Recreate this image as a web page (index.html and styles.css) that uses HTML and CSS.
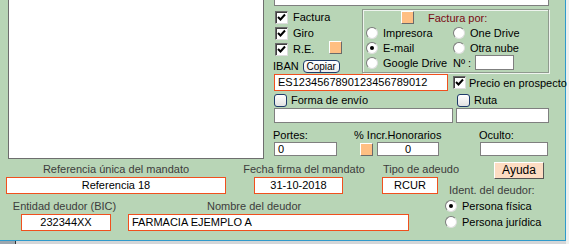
FILE: index.html
```html
<!DOCTYPE html>
<html lang="es">
<head>
    <meta charset="UTF-8">
    <link rel="stylesheet" href="styles.css">
    <title>Datos del cliente</title>
</head>
<body>
<div class="form">
    <div class="top">
        <div class="memo"></div>
        <div class="side">
            <div class="topfield"></div>
            <div class="opts">
                <div class="checks">
                    <div class="chk"><span class="box"><svg width="9" height="9" viewBox="0 0 9 9"><path d="M1 4 L3.5 6.5 L8 1.5" fill="none" stroke="#000" stroke-width="2"/></svg></span>Factura</div>
                    <div class="chk"><span class="box"><svg width="9" height="9" viewBox="0 0 9 9"><path d="M1 4 L3.5 6.5 L8 1.5" fill="none" stroke="#000" stroke-width="2"/></svg></span>Giro</div>
                    <div class="chk"><span class="box"><svg width="9" height="9" viewBox="0 0 9 9"><path d="M1 4 L3.5 6.5 L8 1.5" fill="none" stroke="#000" stroke-width="2"/></svg></span>R.E.<span class="sq re-sq"></span></div>
                    <div class="iban-row">IBAN <span class="copy">Copiar</span></div>
                </div>
                <div class="group">
                    <div class="group-title"><span class="sq"></span><span class="title">Factura por:</span></div>
                    <div class="radios">
                        <div class="rad"><span class="dot"></span>Impresora</div>
                        <div class="rad"><span class="dot"></span>One Drive</div>
                        <div class="rad"><span class="dot on"></span>E-mail</div>
                        <div class="rad"><span class="dot"></span>Otra nube</div>
                        <div class="rad"><span class="dot"></span>Google Drive</div>
                        <div class="rad">Nº :<span class="field num"></span></div>
                    </div>
                </div>
            </div>
            <div class="iban-line">
                <div class="field orange iban">ES1234567890123456789012</div>
                <div class="chk precio"><span class="box"><svg width="9" height="9" viewBox="0 0 9 9"><path d="M1 4 L3.5 6.5 L8 1.5" fill="none" stroke="#000" stroke-width="2"/></svg></span>Precio en prospecto</div>
            </div>
            <div class="envio-line">
                <div class="chk"><span class="flat"></span>Forma de envío</div>
                <div class="chk"><span class="flat"></span>Ruta</div>
            </div>
            <div class="envio-inputs">
                <div class="field"></div>
                <div class="field"></div>
            </div>
            <div class="costs">
                <div class="cost portes">
                    <div class="lbl">Portes:</div>
                    <div class="field">0</div>
                </div>
                <div class="cost honor">
                    <div class="lbl">% Incr.Honorarios</div>
                    <div class="honor-row"><span class="sq"></span><div class="field center">0</div></div>
                </div>
                <div class="cost oculto">
                    <div class="lbl">Oculto:</div>
                    <div class="field"></div>
                </div>
            </div>
        </div>
    </div>
    <div class="bottom">
        <div class="mandate">
            <div class="mrow">
                <div class="col col-ref">
                    <div class="cap">Referencia única del mandato</div>
                    <div class="field orange center">Referencia 18</div>
                </div>
                <div class="col col-fecha">
                    <div class="cap">Fecha firma del mandato</div>
                    <div class="field orange center">31-10-2018</div>
                </div>
                <div class="col col-tipo">
                    <div class="cap">Tipo de adeudo</div>
                    <div class="field orange center">RCUR</div>
                </div>
            </div>
            <div class="mrow second">
                <div class="col col-bic">
                    <div class="cap">Entidad deudor (BIC)</div>
                    <div class="field orange center">232344XX</div>
                </div>
                <div class="col col-nombre">
                    <div class="cap left">Nombre del deudor</div>
                    <div class="field orange">FARMACIA EJEMPLO A</div>
                </div>
            </div>
        </div>
        <div class="ident">
            <div class="help">Ayuda</div>
            <div class="ident-cap">Ident. del deudor:</div>
            <div class="rad"><span class="dot on"></span>Persona física</div>
            <div class="rad"><span class="dot"></span>Persona jurídica</div>
        </div>
    </div>
</div>
<div class="taskbar"><span class="tb-left"></span></div>
</body>
</html>
```

FILE: styles.css
```css
body {
    margin: 0;
    background-color: #eef0ee;
    font-family: "Liberation Sans", Arial, sans-serif;
    font-size: 11px;
    color: #000;
}
.form {
    width: 566px;
    height: 241px;
    box-sizing: border-box;
    background-color: #b8d5b6;
    border-right: 1px solid #2f9acb;
    border-bottom: 1px solid #2f9acb;
}
.taskbar {
    display: flex;
    width: 566px;
    height: 3px;
    background-color: #d4d6d8;
}
.tb-left {
    width: 15px;
    background-color: #9ca6ae;
    border-right: 1px solid #333;
}

/* top part */
.top {
    display: flex;
    height: 159px;
    padding-left: 8px;
}
.memo {
    width: 256px;
    height: 159px;
    box-sizing: border-box;
    background-color: #fff;
    border: 1px solid #6e6e6e;
    border-top: none;
}
.side {
    margin-left: 10px;
    width: 275px;
}
.topfield {
    height: 6px;
    box-sizing: border-box;
    background-color: #fff;
    border: 1px solid #7f7f7f;
    border-top: none;
}
.opts {
    display: flex;
    height: 67px;
}
.checks {
    width: 88px;
    padding-top: 3px;
}
.chk {
    display: flex;
    align-items: center;
    height: 16px;
    white-space: nowrap;
}
.box {
    display: inline-flex;
    align-items: center;
    justify-content: center;
    flex-shrink: 0;
    width: 13px;
    height: 13px;
    box-sizing: border-box;
    margin-left: 1px;
    margin-right: 5px;
    background-color: #fff;
    border: 1px solid;
    border-color: #6a6a6a #dcdcdc #dcdcdc #6a6a6a;
    box-shadow: inset 1px 1px 0 #404040;
}
.sq {
    display: inline-block;
    flex-shrink: 0;
    width: 13px;
    height: 13px;
    box-sizing: border-box;
    background-color: #ffbf82;
    border: 1px solid;
    border-color: #fff #6a6a6a #6a6a6a #fff;
}
.re-sq {
    margin-left: 15px;
    margin-top: -3px;
}
.iban-row {
    display: flex;
    align-items: center;
    height: 16px;
    margin-top: 1px;
    margin-left: -1px;
}
.copy {
    display: inline-block;
    margin-left: 4px;
    width: 37px;
    height: 13px;
    box-sizing: border-box;
    border: 1px solid #1e3b6a;
    border-radius: 4px;
    background: linear-gradient(#fff, #ececec);
    font-size: 10px;
    line-height: 11px;
    text-align: center;
}

/* Factura por */
.group {
    margin-top: 3px;
    width: 187px;
    height: 64px;
    box-sizing: border-box;
    border: 1px solid #8f9a8e;
    box-shadow: inset 1px 1px 0 #eef4ee, 1px 1px 0 #eef4ee;
    padding-left: 3px;
}
.group-title {
    display: flex;
    align-items: center;
    height: 15px;
    padding-left: 35px;
}
.title {
    margin-left: 14px;
    color: #7a0a14;
}
.radios {
    display: grid;
    grid-template-columns: 87px auto;
    grid-auto-rows: 15px;
}
.rad {
    display: flex;
    align-items: center;
    white-space: nowrap;
    height: 15px;
}
.dot {
    position: relative;
    display: inline-block;
    flex-shrink: 0;
    width: 12px;
    height: 12px;
    box-sizing: border-box;
    margin-right: 5px;
    border-radius: 50%;
    background-color: #fff;
    border: 1px solid;
    border-color: #7a7a7a #dedede #dedede #7a7a7a;
}
.dot.on::after {
    content: "";
    position: absolute;
    left: 3px;
    top: 3px;
    width: 4px;
    height: 4px;
    border-radius: 50%;
    background-color: #000;
}
.num {
    margin-left: 4px;
    width: 39px;
    height: 14px;
}

/* fields */
.field {
    flex-shrink: 0;
    height: 15px;
    box-sizing: border-box;
    background-color: #fff;
    border: 1px solid #7f7f7f;
    padding-left: 3px;
    line-height: 13px;
    white-space: nowrap;
}
.field.orange {
    border-color: #f0501e;
    height: 17px;
    line-height: 15px;
}
.field.center {
    text-align: center;
    padding-left: 0;
}
.iban-line {
    display: flex;
    align-items: center;
    margin-top: 1px;
}
.iban {
    width: 174px;
    height: 16px;
    line-height: 14px;
}
.precio {
    margin-left: 4px;
}
.precio .box {
    margin-right: 3px;
}
.envio-line {
    display: grid;
    grid-template-columns: 183px auto;
    height: 17px;
    align-items: end;
}
.flat {
    display: inline-block;
    width: 13px;
    height: 13px;
    box-sizing: border-box;
    margin-right: 4px;
    border: 1px solid #1e3b6a;
    border-radius: 3px;
    background: linear-gradient(#fff, #e2e2e2);
}
.envio-inputs {
    display: grid;
    grid-template-columns: 179px 93px;
    column-gap: 3px;
}
.costs {
    display: flex;
    margin-top: 5px;
}
.lbl {
    height: 14px;
    line-height: 14px;
    margin-left: -1px;
}
.cost .field {
    height: 14px;
    line-height: 12px;
}
.portes {
    width: 81px;
}
.portes .field {
    width: 63px;
}
.honor {
    width: 125px;
}
.honor-row {
    display: flex;
    align-items: center;
}
.honor-row .sq {
    margin-left: 5px;
    margin-right: 4px;
}
.honor-row .field {
    width: 62px;
}
.oculto .field {
    width: 68px;
}

/* bottom part */
.bottom {
    display: flex;
}
.mandate {
    flex-shrink: 0;
    width: 440px;
}
.mrow {
    display: flex;
    padding-top: 3px;
}
.mrow.second {
    padding-top: 5px;
}
.col {
    flex-shrink: 0;
}
.cap {
    display: flex;
    justify-content: center;
    height: 15px;
    line-height: 15px;
    white-space: nowrap;
    color: #3c3c3c;
}
.cap.left {
    justify-content: flex-start;
    padding-left: 79px;
}
.col-ref {
    margin-left: 6px;
    width: 220px;
}
.col-fecha {
    margin-left: 19px;
    width: 118px;
}
.col-fecha .field {
    margin-left: 9px;
    width: 89px;
}
.col-tipo {
    margin-left: 19px;
    width: 78px;
}
.col-tipo .field {
    width: 56px;
}
.col-bic {
    margin-left: 13px;
    width: 103px;
}
.col-bic .field {
    margin-left: 8px;
    width: 90px;
}
.col-nombre {
    margin-left: 12px;
    width: 281px;
}
.ident {
    width: 110px;
}
.help {
    margin-top: 3px;
    margin-left: 54px;
    width: 50px;
    height: 17px;
    box-sizing: border-box;
    background-color: #fddcc2;
    border: 1px solid;
    border-color: #fff #555 #555 #fff;
    text-align: center;
    line-height: 15px;
    font-size: 12px;
}
.ident-cap {
    margin-top: 4px;
    padding-left: 9px;
    height: 15px;
    line-height: 15px;
    color: #3c3c3c;
    white-space: nowrap;
}
.ident .rad {
    margin-left: 5px;
    height: 16px;
}
.ident .rad:first-of-type {
    margin-top: 1px;
}
```
